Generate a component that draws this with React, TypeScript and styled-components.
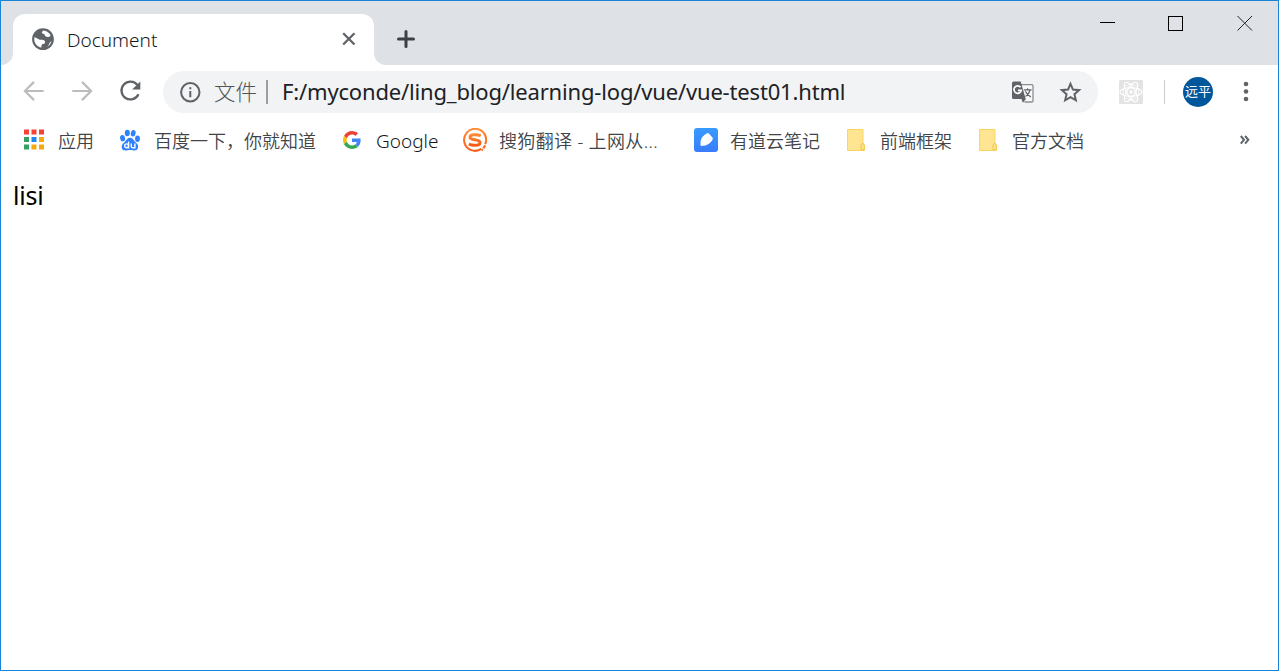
import React from 'react';
import styled, { createGlobalStyle } from 'styled-components';

const GlobalStyle = createGlobalStyle`
  * { box-sizing: border-box; }
  body { margin: 0; background: #fff; font-family: "Noto Sans", "Noto Sans CJK SC", sans-serif; }
  svg { display: block; flex: none; }
`;

const Window = styled.div`
  width: 1279px;
  height: 671px;
  border: 1px solid #1883d7;
  background: #fff;
  display: flex;
  flex-direction: column;
  overflow: hidden;
`;

const TabStrip = styled.header`
  height: 64px;
  flex: none;
  display: flex;
  background: #fff;
`;

const StripEdge = styled.div`
  width: 12px;
  background: #dee1e6;
  border-bottom-right-radius: 12px;
`;

const TabHolder = styled.div`
  width: 361px;
  padding-top: 13px;
  background: linear-gradient(#dee1e6 0 32px, #fff 32px);
`;

const Tab = styled.div`
  height: 51px;
  padding: 0 18px 1px 18px;
  display: flex;
  align-items: center;
  background: #fff;
  border-radius: 12px 12px 0 0;
`;

const TabTitle = styled.span`
  flex: 1;
  margin-left: 12px;
  font-size: 19px;
  line-height: 26px;
  padding-top: 2px;
  font-weight: 300;
  color: #15181b;
`;

const StripRest = styled.div`
  flex: 1;
  display: flex;
  justify-content: space-between;
  background: #dee1e6;
  border-bottom-left-radius: 12px;
  padding: 14px 25px 0 23px;
`;

const NewTab = styled.div`
  padding-top: 15px;
`;

const WindowControls = styled.div`
  display: flex;
  gap: 53px;
`;

const Toolbar = styled.div`
  height: 53px;
  flex: none;
  display: flex;
  align-items: center;
  padding-left: 21px;
`;

const NavButtons = styled.div`
  display: flex;
  gap: 24px;
  width: 141px;
  padding-bottom: 1px;
`;

const AddressBar = styled.div`
  width: 935px;
  height: 42px;
  border-radius: 21px;
  background: #f1f3f4;
  display: flex;
  align-items: center;
  padding: 0 15px 0 16px;
`;

const Scheme = styled.span`
  width: 43px;
  margin-left: 13px;
  font-size: 21.5px;
  line-height: 30px;
  font-weight: 300;
  color: #505459;
  white-space: nowrap;
`;

const SchemeDivider = styled.i`
  width: 2px;
  height: 24px;
  margin: 0 14px 0 9px;
  background: #9b9ea1;
`;

const Url = styled.span`
  flex: 1;
  padding-bottom: 2px;
  font-size: 22px;
  line-height: 30px;
  color: #202124;
  white-space: nowrap;
  letter-spacing: -0.17px;
`;

const AddressActions = styled.div`
  display: flex;
  gap: 24px;
`;

const Extension = styled.div`
  margin-left: 21px;
`;

const ToolbarDivider = styled.i`
  width: 1px;
  height: 24px;
  margin: 0 18px 0 21px;
  background: #c9cbce;
`;

const Avatar = styled.div`
  width: 30px;
  height: 30px;
  border-radius: 50%;
  background: #01579b;
  color: #fff;
  font-size: 13px;
  line-height: 29px;
  text-align: center;
  white-space: nowrap;
`;

const MenuButton = styled.div`
  margin-left: 21px;
`;

const BookmarkBar = styled.nav`
  height: 46px;
  flex: none;
  display: flex;
  align-items: center;
  gap: 24px;
  padding: 0 28px 2px 21px;
`;

const Bookmark = styled.div`
  display: flex;
  align-items: center;
  gap: 12px;
`;

const BookmarkIcon = styled.div`
  width: 24px;
  height: 24px;
`;

const BookmarkLabel = styled.span<{ $width: number; $size?: number; $spacing?: number; $color?: string }>`
  width: ${p => p.$width}px;
  font-size: ${p => p.$size ?? 18}px;
  letter-spacing: ${p => p.$spacing ?? 0}px;
  line-height: 26px;
  padding-top: 1px;
  font-weight: 350;
  color: ${p => p.$color ?? '#404448'};
  white-space: nowrap;
`;

const Overflow = styled.div`
  margin-left: auto;
`;

const Page = styled.main`
  flex: 1;
  padding: 13px 12px;
  font-size: 25px;
  line-height: 36px;
  letter-spacing: -0.2px;
  color: #000;
`;

const GLOBE =
  'M12 2C6.48 2 2 6.48 2 12s4.480 10 10 10 10-4.480 10-10S17.520 2 12 2zM4 12c0-.6.1-1.300.25-1.900L8.500 12.200c.8.4 1.500.5 2.600.4 1.800-.1 2.700 1 2.800 2.300.1 1.100-.7 1.400-1.900 1.600-1.300.2-1.400 1.200-1.500 3.200C6.800 19 4 15.900 4 12zm11.800 7.030c1.500-1.300 1.700-2.500 2.400-3.700.5-.9 1.100-1.300 1.600-1.700-.5 2.300-2 4.200-4 5.400zM17.800 9.800c-1.500.6-2.900.2-3.700-.7-.8-.9-.5-1.800-1.700-2-1.500-.2-1.800-1.100-1-2.200.3-.4.600-.7 1-.9 2.900.2 5.300 1.900 6.600 4.300-.3.700-.7 1.200-1.200 1.500z';

const bookmarks = [
  { icon: <AppsIcon />, label: '应用', width: 36 },
  { icon: <BaiduIcon />, label: '百度一下，你就知道', width: 162 },
  { icon: <GoogleIcon />, label: 'Google', width: 63, size: 19, color: '#15181b' },
  { icon: <SogouIcon />, label: '搜狗翻译 - 上网从...', width: 171, spacing: 0.35 },
  { icon: <YoudaoIcon />, label: '有道云笔记', width: 90 },
  { icon: <FolderIcon />, label: '前端框架', width: 72 },
  { icon: <FolderIcon />, label: '官方文档', width: 72 },
];

function AppsIcon() {
  const colors = ['#f44336', '#f44336', '#f44336', '#34a160', '#1e88ee', '#f7a80b', '#34a160', '#f7a80b', '#f7a80b'];
  return (
    <svg width="24" height="24">
      {colors.map((c, i) => (
        <rect key={i} x={2 + (i % 3) * 7.5} y={1.5 + Math.floor(i / 3) * 7.5} width="5" height="5" fill={c} />
      ))}
    </svg>
  );
}

function BaiduIcon() {
  return (
    <svg width="24" height="24" viewBox="0 0 24 24" fill="#2e82ff">
      <ellipse cx="4.600" cy="10.200" rx="2.500" ry="3.200" transform="rotate(-10 4.600 10.200)" />
      <ellipse cx="9.300" cy="5" rx="2.500" ry="3.300" />
      <ellipse cx="15.200" cy="5.200" rx="2.400" ry="3.300" transform="rotate(12 15.200 5.200)" />
      <ellipse cx="19.500" cy="10.700" rx="2.400" ry="3.200" />
      <path d="M12 9.800c2.400 0 3.300 2.200 5 3.900 1.700 1.600 3.300 2.800 3.100 5.200-.2 2.600-2 3.700-4.300 3.500-1.500-.1-2.300-.4-3.800-.4s-2.300.3-3.800.4c-2.600.2-4.400-1-4.500-3.500-.1-2.400 1.600-3.600 3.200-5.200C8.600 12 9.600 9.800 12 9.800z" />
      <g fill="none" stroke="#fff" strokeWidth="1.400">
        <circle cx="8.600" cy="17.800" r="1.900" />
        <path d="M10.600 13.500v6.900M13.300 15.600v2.800q0 1.400 1.400 1.400h2.200v-4.200" />
      </g>
    </svg>
  );
}

function GoogleIcon() {
  return (
    <svg width="24" height="24" viewBox="-8 -8 64 64">
      <path fill="#EA4335" d="M24 9.500c3.540 0 6.710 1.220 9.210 3.600l6.850-6.850C35.900 2.380 30.470 0 24 0 14.620 0 6.510 5.380 2.560 13.220l7.980 6.190C12.430 13.720 17.740 9.500 24 9.500z" />
      <path fill="#4285F4" d="M46.980 24.550c0-1.570-.15-3.090-.38-4.550H24v9.020h12.940c-.58 2.960-2.260 5.480-4.780 7.180l7.730 6c4.510-4.180 7.090-10.360 7.090-17.650z" />
      <path fill="#FBBC05" d="M10.530 28.590A14.500 14.500 0 0 1 9.770 24c0-1.600.27-3.140.76-4.590l-7.980-6.190A23.900 23.900 0 0 0 0 24c0 3.870.92 7.530 2.560 10.780z" />
      <path fill="#34A853" d="M24 48c6.480 0 11.930-2.130 15.890-5.810l-7.730-6c-2.150 1.450-4.920 2.300-8.160 2.300-6.260 0-11.570-4.220-13.470-9.910l-7.980 6.190C6.510 42.620 14.620 48 24 48z" />
    </svg>
  );
}

function SogouIcon() {
  return (
    <svg width="24" height="24" viewBox="0 0 24 24" fill="none" stroke="#fd6f22">
      <defs>
        <linearGradient id="sogou" x1="0" y1="0" x2="0" y2="1">
          <stop offset="0" stopColor="#ff8a32" />
          <stop offset="1" stopColor="#f85a12" />
        </linearGradient>
      </defs>
      <path stroke="url(#sogou)" strokeWidth="2" d="M18.300 20.900A11 11 0 1 1 22.200 16.200" />
      <path stroke="url(#sogou)" strokeWidth="3" d="M17.700 7.600C15.500 6.800 13.500 6.600 11.200 6.700 8.600 6.800 7 7.700 7 9.200c0 1.700 2 2.100 5 2.600 3.200.5 5 1.100 5 2.900 0 1.900-2.200 2.600-5 2.600-2.400 0-4.200-.3-6.200-1.100" />
      <path strokeWidth="2.200" d="M22.200 17.400l-1.900 3M19.700 21.200l-1 1.300" />
    </svg>
  );
}

function YoudaoIcon() {
  return (
    <svg width="24" height="24" viewBox="0 0 24 24">
      <defs>
        <linearGradient id="youdao" x1="0" y1="0" x2="0" y2="1">
          <stop offset="0" stopColor="#389bff" />
          <stop offset="1" stopColor="#397cfb" />
        </linearGradient>
      </defs>
      <rect width="24" height="24" rx="3" fill="url(#youdao)" />
      <path d="M13 5.200q1-.7 1.900.2l3.500 4q.9 1 .2 2.100c-1.300 2.300-3.200 4.600-6 5.500-1.700.6-3.900.9-5.400.9q-.7 0-.7-.8c-.1-2.500.1-5.100 1.200-7C8.700 8.300 10.800 6.500 13 5.200z" fill="#fff" />
    </svg>
  );
}

function FolderIcon() {
  return (
    <svg width="24" height="24" viewBox="0 0 24 24">
      <path d="M3.500 1.500h15.500v14.200l1.200 1v5.800H3.500z" fill="#ffe592" stroke="#fcd65c" />
      <path d="M17 21.800v-3.600q0-2.700 1.700-2.700 1.600 0 1.600 2.200v4.100z" fill="#ffe38a" stroke="#efc548" />
    </svg>
  );
}

function TranslateIcon() {
  return (
    <svg width="24" height="24" viewBox="0 0 24 24">
      <path d="M10 4.700h10.700q1.300 0 1.300 1.300v14.700q0 1.300-1.300 1.300h-7.200" fill="#f8f9fa" stroke="#8a8d91" strokeWidth="1.300" />
      <path d="M2.500 1.500h7.200l5 17.500H2.500Q1 19 1 17.500V3q0-1.500 1.500-1.500z" fill="#5f6368" />
      <path d="M10.400 19h4.500l-3 3.800z" fill="#5f6368" />
      <path d="M9.600 7.300A3.700 3.700 0 1 0 10.300 10.300H6.900" fill="none" stroke="#fff" strokeWidth="1.700" />
      <path d="M12.800 9.900h7.800M16.500 8.200v1.700M19.100 10c-.7 3-2.300 5-4.600 6.500M14.300 11.300c1.300 2.600 3 4.200 5.600 5.700" fill="none" stroke="#5f6368" strokeWidth="1.200" />
    </svg>
  );
}

function ReactToolsIcon() {
  return (
    <svg width="24" height="24" viewBox="0 0 24 24" fill="none">
      <rect width="24" height="24" rx="1.500" fill="#e3e3e3" />
      <g stroke="#fff" strokeWidth="1.100">
        <ellipse cx="12" cy="12" rx="11" ry="4.300" />
        <ellipse cx="12" cy="12" rx="11" ry="4.300" transform="rotate(60 12 12)" />
        <ellipse cx="12" cy="12" rx="11" ry="4.300" transform="rotate(120 12 12)" />
        <circle cx="12" cy="12" r="4.200" />
        <circle cx="12" cy="12" r="8" strokeWidth=".7" />
      </g>
      <circle cx="12" cy="12" r="1.800" fill="#fff" />
    </svg>
  );
}

export default function App() {
  return (
    <>
      <GlobalStyle />
      <Window>
        <TabStrip>
          <StripEdge />
          <TabHolder>
            <Tab>
              <svg width="24" height="24" viewBox="0 0 24 24">
                <path d={GLOBE} fill="#5f6368" fillRule="evenodd" transform="translate(-1.080 -.9) scale(1.090)" />
              </svg>
              <TabTitle>Document</TabTitle>
              <svg width="14" height="14" viewBox="0 0 14 14" stroke="#5f6368" strokeWidth="2.300">
                <path d="M1.200 1.200l11.300 11.300M12.500 1.200L1.200 12.500" />
              </svg>
            </Tab>
          </TabHolder>
          <StripRest>
            <NewTab>
              <svg width="18" height="18" viewBox="0 0 18 18" stroke="#3c4043" strokeWidth="3" strokeLinecap="round">
                <path d="M9 1.500v15M1.500 9h15" />
              </svg>
            </NewTab>
            <WindowControls>
              <svg width="15" height="16" shapeRendering="crispEdges"><rect y="7" width="15" height="1" /></svg>
              <svg width="16" height="16" fill="none" stroke="#000" shapeRendering="crispEdges"><rect x=".5" y="1.500" width="14" height="14" /></svg>
              <svg width="16" height="17" stroke="#222" strokeWidth="1"><path d="M.5 1l14.500 14.500M15 1L.5 15.500" /></svg>
            </WindowControls>
          </StripRest>
        </TabStrip>

        <Toolbar>
          <NavButtons>
            <svg width="24" height="24" viewBox="0 0 24 24" fill="none" stroke="#babcbe" strokeWidth="2.200"><path d="M21.700 12H3M12 2.900L2.900 12l9.100 9.100" /></svg>
            <svg width="24" height="24" viewBox="0 0 24 24" fill="none" stroke="#babcbe" strokeWidth="2.200"><path d="M2.300 12H21M12 2.900l9.100 9.100-9.100 9.100" /></svg>
            <svg width="24" height="24" viewBox="0 0 24 24">
              <path d="M19.400 6A8.900 8.900 0 1 0 20.500 15.300" fill="none" stroke="#5f6368" strokeWidth="2.300" />
              <path d="M22.300 2.400v8.200h-8.200z" fill="#5f6368" />
            </svg>
          </NavButtons>
          <AddressBar>
            <svg width="22" height="22" viewBox="0 0 22 22">
              <circle cx="11.300" cy="11.300" r="9.200" fill="none" stroke="#5f6368" strokeWidth="2" />
              <path d="M10.300 6.200h2v2h-2zM10.300 10h2v6.200h-2z" fill="#5f6368" />
            </svg>
            <Scheme>文件</Scheme>
            <SchemeDivider />
            <Url>F:/myconde/ling_blog/learning-log/vue/vue-test01.html</Url>
            <AddressActions>
              <TranslateIcon />
              <svg width="24" height="24" viewBox="0 0 24 24" fill="none" stroke="#5f6368" strokeWidth="2">
                <path d="M11.500 3.900l2.450 5.700 6.150.55-4.650 4.050 1.400 6.050-5.350-3.200-5.350 3.200 1.400-6.050L2.900 10.150l6.150-.55z" />
              </svg>
            </AddressActions>
          </AddressBar>
          <Extension><ReactToolsIcon /></Extension>
          <ToolbarDivider />
          <Avatar>远平</Avatar>
          <MenuButton>
            <svg width="24" height="24" fill="#5f6368"><circle cx="12" cy="4" r="2.300" /><circle cx="12" cy="11.500" r="2.300" /><circle cx="12" cy="19" r="2.300" /></svg>
          </MenuButton>
        </Toolbar>

        <BookmarkBar>
          {bookmarks.map((b, i) => (
            <Bookmark key={i}>
              <BookmarkIcon>{b.icon}</BookmarkIcon>
              <BookmarkLabel $width={b.width} $size={b.size} $spacing={b.spacing} $color={b.color}>{b.label}</BookmarkLabel>
            </Bookmark>
          ))}
          <Overflow>
            <svg width="10" height="10" viewBox="0 0 10 10" fill="none" stroke="#5f6368" strokeWidth="2"><path d="M.8 1l3.200 3.800-3.200 3.800M5.100 1l3.200 3.800-3.200 3.800" /></svg>
          </Overflow>
        </BookmarkBar>
        <Page>lisi</Page>
      </Window>
    </>
  );
}
